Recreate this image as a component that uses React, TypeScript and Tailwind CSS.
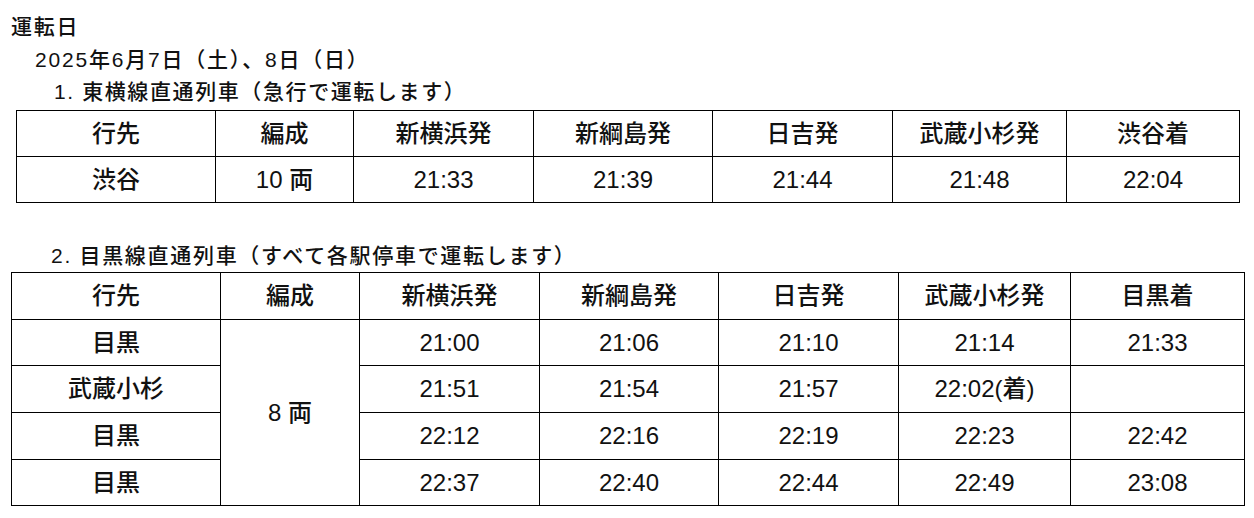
import React from "react";

const FONT = "font-['Liberation_Sans','Noto_Sans_CJK_JP',sans-serif]";

type Row = string[];

const t1Widths = [199, 138, 180, 179, 180, 174, 173];
const t2Widths = [209, 139, 180, 179, 180, 172, 174];

const Cell = ({ children, rowSpan }: { children?: React.ReactNode; rowSpan?: number }) => (
  <td rowSpan={rowSpan} className="border border-black p-0 text-center align-middle whitespace-nowrap">
    {children}
  </td>
);

export default function App() {
  const header1 = ["行先", "編成", "新横浜発", "新綱島発", "日吉発", "武蔵小杉発", "渋谷着"];
  const header2 = ["行先", "編成", "新横浜発", "新綱島発", "日吉発", "武蔵小杉発", "目黒着"];
  const rows2: Row[] = [
    ["目黒", "21:00", "21:06", "21:10", "21:14", "21:33"],
    ["武蔵小杉", "21:51", "21:54", "21:57", "22:02(着)", ""],
    ["目黒", "22:12", "22:16", "22:19", "22:23", "22:42"],
    ["目黒", "22:37", "22:40", "22:44", "22:49", "23:08"],
  ];
  const h2 = [47, 46, 47, 47, 46];

  return (
    <div className={`${FONT} font-medium bg-white text-[#111] w-[1254px] h-[518px] overflow-hidden pt-[11px]`}>
      <div className="pl-[11px] text-[21px] leading-[32px] tracking-[1.7px]">運転日</div>
      <div className="pl-[35px] text-[21px] leading-[34px] tracking-[1.8px]">2025年6月7日（土）、8日（日）</div>
      <div className="pl-[54px] text-[21px] leading-[30px] tracking-[1.6px]">1. 東横線直通列車（急行で運転します）</div>

      <table className="ml-[16px] mt-[3px] w-[1223px] table-fixed border-collapse text-[24px] leading-none">
        <colgroup>
          {t1Widths.map((w, i) => (
            <col key={i} style={{ width: w }} />
          ))}
        </colgroup>
        <tbody>
          <tr className="h-[46px]">
            {header1.map((h) => (
              <Cell key={h}>{h}</Cell>
            ))}
          </tr>
          <tr className="h-[46px]">
            <Cell>渋谷</Cell>
            <Cell>10 両</Cell>
            <Cell>21:33</Cell>
            <Cell>21:39</Cell>
            <Cell>21:44</Cell>
            <Cell>21:48</Cell>
            <Cell>22:04</Cell>
          </tr>
        </tbody>
      </table>

      <div className="pl-[51px] mt-[38px] text-[21px] leading-[30px] tracking-[1.7px]">
        2. 目黒線直通列車（すべて各駅停車で運転します）
      </div>

      <table className="ml-[11px] mt-[1px] w-[1233px] table-fixed border-collapse text-[24px] leading-none">
        <colgroup>
          {t2Widths.map((w, i) => (
            <col key={i} style={{ width: w }} />
          ))}
        </colgroup>
        <tbody>
          <tr style={{ height: h2[0] }}>
            {header2.map((h) => (
              <Cell key={h}>{h}</Cell>
            ))}
          </tr>
          {rows2.map((r, ri) => (
            <tr key={ri} style={{ height: h2[ri + 1] }}>
              <Cell>{r[0]}</Cell>
              {ri === 0 && <Cell rowSpan={4}>8 両</Cell>}
              {r.slice(1).map((v, ci) => (
                <Cell key={ci}>{v}</Cell>
              ))}
            </tr>
          ))}
        </tbody>
      </table>
    </div>
  );
}
